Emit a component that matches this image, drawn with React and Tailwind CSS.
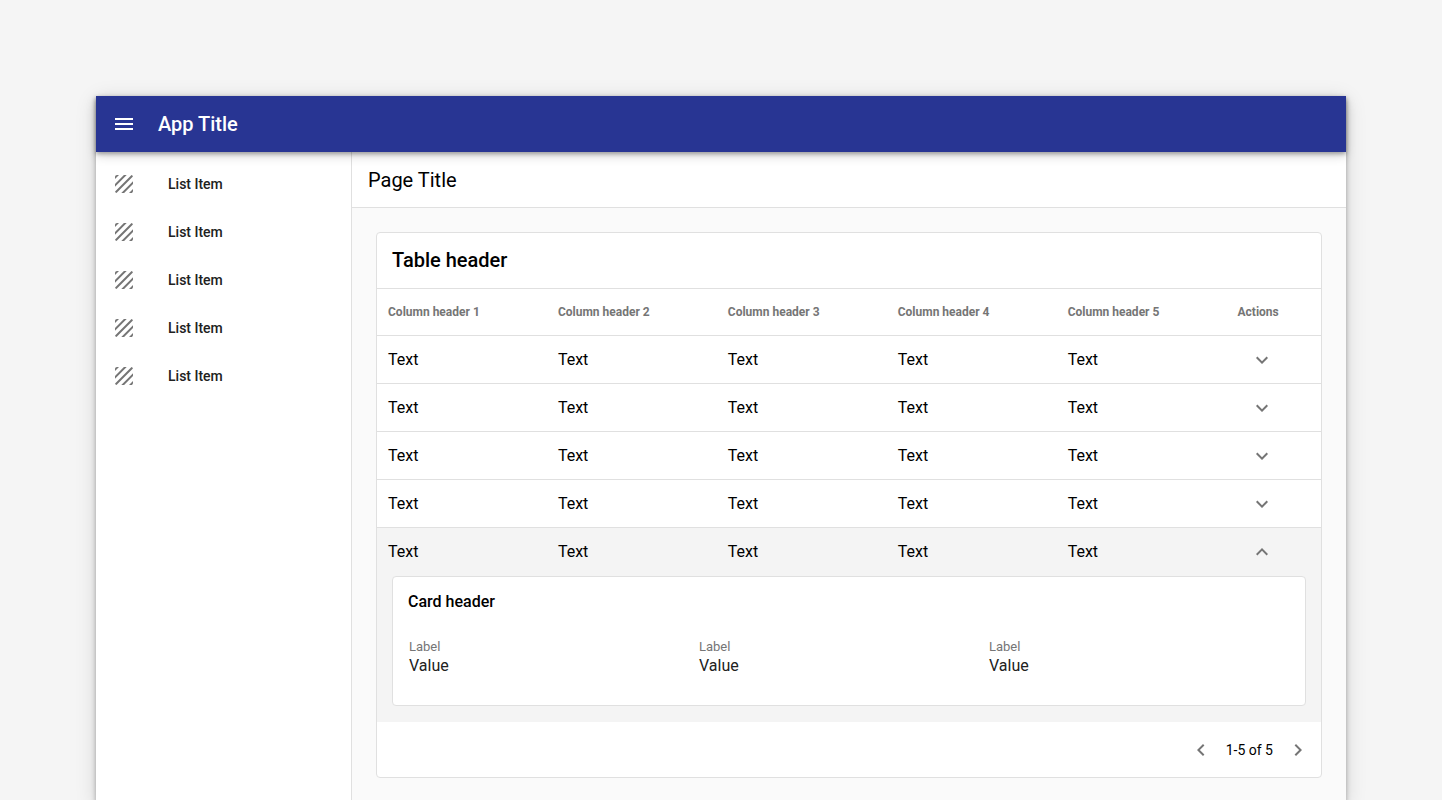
import { useState } from "react";
import {
  MdChevronLeft,
  MdChevronRight,
  MdExpandLess,
  MdExpandMore,
  MdMenu,
  MdTexture,
} from "react-icons/md";

const navItems = [1, 2, 3, 4, 5];
const columns = [1, 2, 3, 4, 5];
const rows = [1, 2, 3, 4, 5];
const details = [1, 2, 3];

function AppBar() {
  return (
    <header className="relative z-10 flex h-14 items-center gap-3.5 bg-[#283593] px-2 text-white shadow-[0_2px_4px_rgba(0,0,0,0.3),0_4px_10px_rgba(0,0,0,0.16)]">
      <button type="button" aria-label="Menu" className="flex size-10 items-center justify-center">
        <MdMenu className="size-6" />
      </button>
      <span className="text-xl font-medium">App Title</span>
    </header>
  );
}

function SideNav() {
  return (
    <nav className="w-64 shrink-0 border-r border-[#e0e0e0] bg-white py-2">
      <ul>
        {navItems.map((item) => (
          <li key={item}>
            <a href="#" className="flex h-12 items-center gap-8 px-4 text-sm font-medium text-[#212121]">
              <MdTexture className="size-6 text-[#757575]" />
              List Item
            </a>
          </li>
        ))}
      </ul>
    </nav>
  );
}

function DetailCard() {
  return (
    <section className="h-[130px] rounded border border-[#e0e0e0] bg-white">
      <h3 className="px-[15px] pt-[13px] text-base font-medium text-black">Card header</h3>
      <dl className="grid grid-cols-3 pt-[23px] pr-[26px] pl-4">
        {details.map((item) => (
          <div key={item}>
            <dt className="text-[13px] leading-5 text-[#757575]">Label</dt>
            <dd className="text-base leading-[18px] text-[#212121]">Value</dd>
          </div>
        ))}
      </dl>
    </section>
  );
}

function DataRow({ open, last, onToggle }) {
  const line = last ? "" : "border-b border-[#e0e0e0]";
  return (
    <>
      <tr className={open ? "bg-[#f4f4f4]" : "bg-white"}>
        {columns.map((column) => (
          <td key={column} className={`h-12 px-[11px] text-base text-black ${open ? "" : line}`}>
            Text
          </td>
        ))}
        <td className={`h-12 px-[11px] ${open ? "" : line}`}>
          <button
            type="button"
            aria-label={open ? "Collapse row" : "Expand row"}
            aria-expanded={open}
            onClick={onToggle}
            className="flex h-10 w-12 items-center justify-center text-[#757575]"
          >
            {open ? <MdExpandLess className="size-6" /> : <MdExpandMore className="size-6" />}
          </button>
        </td>
      </tr>
      {open && (
        <tr className="bg-[#f4f4f4]">
          <td colSpan={6} className={`px-[15px] pb-4 ${line}`}>
            <DetailCard />
          </td>
        </tr>
      )}
    </>
  );
}

function DataTable() {
  const [openRow, setOpenRow] = useState(5);
  return (
    <section className="rounded border border-[#e0e0e0] bg-white">
      <h2 className="border-b border-[#e0e0e0] px-[15px] pt-[13px] pb-3.5 text-xl font-medium text-black">
        Table header
      </h2>
      <table className="w-full table-fixed border-separate border-spacing-0 text-left">
        <thead>
          <tr>
            {columns.map((column) => (
              <th
                key={column}
                scope="col"
                className="h-[47px] w-[18%] border-b border-[#e0e0e0] px-[11px] text-xs font-bold text-[#757575]"
              >
                Column header {column}
              </th>
            ))}
            <th
              scope="col"
              className="h-[47px] border-b border-[#e0e0e0] px-[11px] text-xs font-bold text-[#757575]"
            >
              Actions
            </th>
          </tr>
        </thead>
        <tbody>
          {rows.map((row) => (
            <DataRow
              key={row}
              open={openRow === row}
              last={row === rows.length}
              onToggle={() => setOpenRow(openRow === row ? null : row)}
            />
          ))}
        </tbody>
      </table>
      <div className="flex h-[55px] items-center justify-end gap-[13px] px-[11px] text-sm text-black">
        <button type="button" aria-label="Previous page" className="text-[#757575]">
          <MdChevronLeft className="size-6" />
        </button>
        <span>1-5 of 5</span>
        <button type="button" aria-label="Next page" className="text-[#757575]">
          <MdChevronRight className="size-6" />
        </button>
      </div>
    </section>
  );
}

export default function App() {
  return (
    <div className="flex h-screen flex-col overflow-hidden bg-[#f5f5f5] px-24 pt-24 font-['Roboto',sans-serif]">
      <div className="flex flex-1 flex-col bg-white shadow-[0_3px_5px_rgba(0,0,0,0.3),0_4px_20px_rgba(0,0,0,0.14)]">
        <AppBar />
        <div className="flex flex-1">
          <SideNav />
          <main className="min-w-0 flex-1 bg-[#fafafa]">
            <h1 className="flex h-14 items-center border-b border-[#e0e0e0] bg-white px-4 text-xl font-normal text-black">
              Page Title
            </h1>
            <div className="p-6">
              <DataTable />
            </div>
          </main>
        </div>
      </div>
    </div>
  );
}
